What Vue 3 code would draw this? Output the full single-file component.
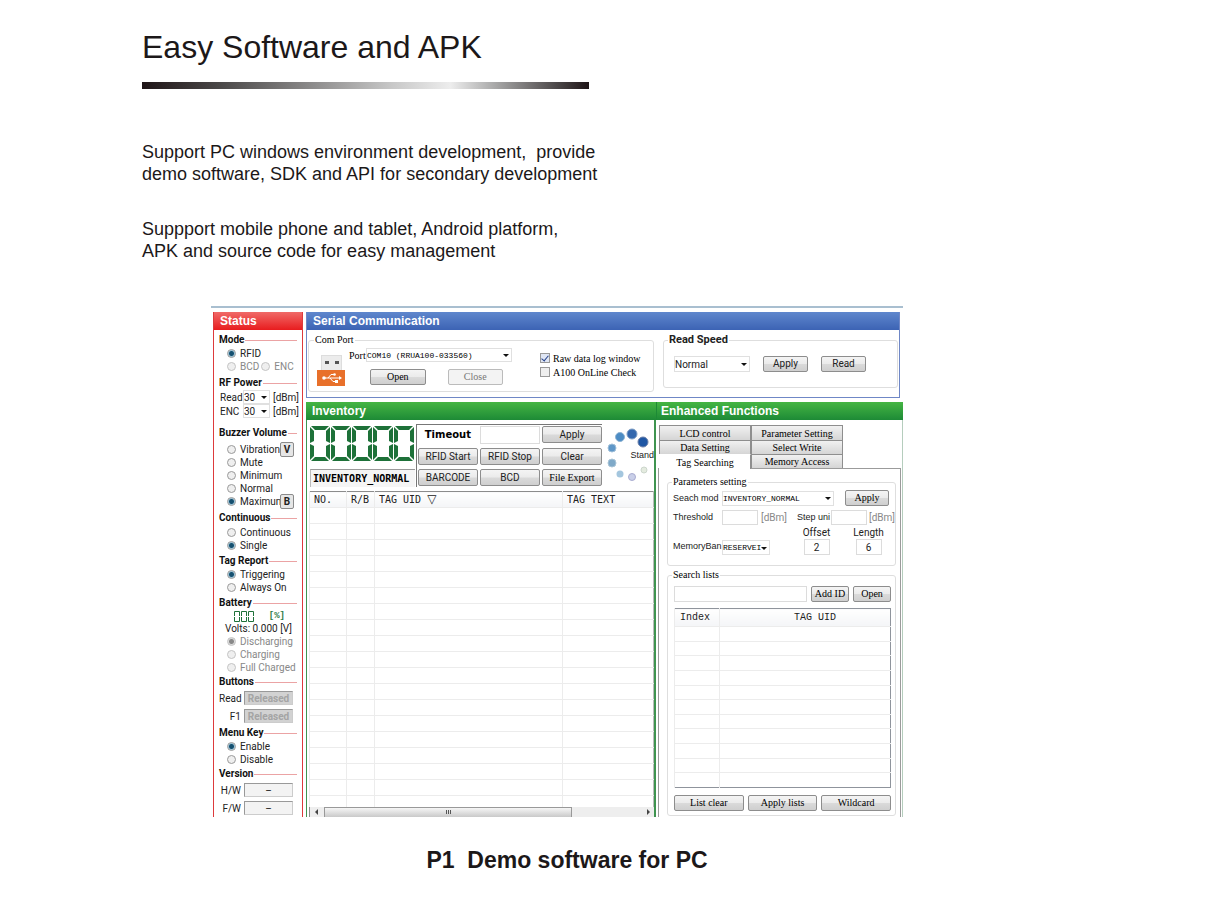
<script setup>
import { reactive, ref } from 'vue'

const groups = reactive([
  { id: 'buzzer', title: 'Buzzer Volume', cls: 'far', value: 'Maximum', options: ['Vibration', 'Mute', 'Minimum', 'Normal', 'Maximum'], keys: { Vibration: 'V', Maximum: 'B' } },
  { id: 'cont', title: 'Continuous', cls: 'mid', value: 'Single', options: ['Continuous', 'Single'], keys: {} },
  { id: 'report', title: 'Tag Report', cls: 'near', value: 'Triggering', options: ['Triggering', 'Always On'], keys: {} }
])
const mode = ref('RFID')
const battery = ref('Discharging')
const menuKey = ref('Enable')
const rawLog = ref(true)
const online = ref(false)
const segments = ['t', 'b', 'lt', 'lb', 'rt', 'rb']
</script>

<template>
  <main class="page">
    <h1>Easy Software and APK</h1>
    <div class="rule"></div>
    <p class="intro">Support PC windows environment development,&nbsp; provide<br>demo software, SDK and API for secondary development</p>
    <p class="intro second">Suppport mobile phone and tablet, Android platform,<br>APK and source code for easy management</p>

    <figure>
      <div class="app">
        <aside class="status">
          <h2 class="bar red">Status</h2>
          <div class="status-body">
            <section class="near">
              <h3>Mode</h3>
              <label class="opt"><input v-model="mode" type="radio" name="mode" value="RFID">RFID</label>
              <div class="pair">
                <label class="opt off"><input type="radio" name="mode" value="BCD" disabled>BCD</label>
                <label class="opt off"><input type="radio" name="mode" value="ENC" disabled>ENC</label>
              </div>
            </section>
            <section class="mid">
              <h3>RF Power</h3>
              <div v-for="p in ['Read', 'ENC']" :key="p" class="power">
                <label :for="'pw' + p">{{ p }}</label>
                <span class="sel"><select :id="'pw' + p"><option>30</option></select></span>
                <span>[dBm]</span>
              </div>
            </section>
            <section v-for="g in groups" :key="g.id" :class="[g.cls, g.id]">
              <h3>{{ g.title }}</h3>
              <div v-for="o in g.options" :key="o" class="line">
                <label class="opt"><input v-model="g.value" type="radio" :name="g.id" :value="o">{{ o }}</label>
                <button v-if="g.keys[o]" class="key" type="button">{{ g.keys[o] }}</button>
              </div>
            </section>
            <section class="near">
              <h3>Battery</h3>
              <div class="charge">
                <span class="led small" role="img" aria-label="000"><span v-for="n in 3" :key="n" class="digit"><i v-for="s in segments" :key="s" :class="s"></i></span></span>
                <span class="pct">[%]</span>
              </div>
              <div class="volts">Volts: 0.000 [V]</div>
              <label v-for="o in ['Discharging', 'Charging', 'Full Charged']" :key="o" class="opt off"><input v-model="battery" type="radio" name="battery" :value="o" disabled>{{ o }}</label>
            </section>
            <section class="tight">
              <h3>Buttons</h3>
              <div v-for="b in ['Read', 'F1']" :key="b" class="field">
                <label :for="'bt' + b">{{ b }}</label><input :id="'bt' + b" class="released" value="Released" disabled>
              </div>
            </section>
            <section class="tight">
              <h3>Menu Key</h3>
              <label v-for="o in ['Enable', 'Disable']" :key="o" class="opt"><input v-model="menuKey" type="radio" name="menukey" :value="o">{{ o }}</label>
            </section>
            <section class="tight">
              <h3>Version</h3>
              <div v-for="b in ['H/W', 'F/W']" :key="b" class="field">
                <label :for="'vr' + b">{{ b }}</label><input :id="'vr' + b" class="version" value="–" readonly>
              </div>
            </section>
          </div>
        </aside>

        <div class="work">
          <section class="serial">
            <h2 class="bar blue">Serial Communication</h2>
            <div class="serial-body">
              <fieldset class="com">
                <legend class="song">Com Port</legend>
                <div class="com-row">
                  <svg class="usb" width="28" height="31" viewBox="0 0 28 31" aria-hidden="true">
                    <rect x="4.500" y="0.500" width="20" height="15" fill="#ececec" stroke="#ddd" />
                    <rect x="8" y="6" width="4" height="3" fill="#555" /><rect x="18" y="6" width="4" height="3" fill="#555" />
                    <rect y="15" width="28" height="16" fill="#e8702a" />
                    <path d="M7 23H23M11 23L14 19.500H17M13 23L16 26.500H19" fill="none" stroke="#fff" />
                    <circle cx="7" cy="23" r="1.800" fill="#fff" /><circle cx="17.500" cy="19.500" r="1.300" fill="#fff" /><rect x="18" y="25" width="3" height="3" fill="#fff" /><path d="M22 21L25 23L22 25Z" fill="#fff" />
                  </svg>
                  <div class="port">
                    <div class="port-row">
                      <label class="song" for="port">Port</label>
                      <span class="sel"><select id="port" class="fixed"><option>COM10 (RRUA100-033560)</option></select></span>
                    </div>
                    <div class="port-btns">
                      <button class="btn song" type="button">Open</button>
                      <button class="btn song" type="button" disabled>Close</button>
                    </div>
                  </div>
                  <div class="checks song">
                    <label><input v-model="rawLog" type="checkbox">Raw data log window</label>
                    <label><input v-model="online" type="checkbox">A100 OnLine Check</label>
                  </div>
                </div>
              </fieldset>
              <fieldset class="speed">
                <legend>Read Speed</legend>
                <div class="speed-row">
                  <span class="sel"><select aria-label="Read Speed"><option>Normal</option></select></span>
                  <button class="btn" type="button">Apply</button>
                  <button class="btn" type="button">Read</button>
                </div>
              </fieldset>
            </div>
          </section>

          <div class="lower">
            <section class="inventory">
              <h2 class="bar green">Inventory</h2>
              <div class="inv-body">
                <div class="inv-top">
                  <div class="counter">
                    <span class="led" role="img" aria-label="00000"><span v-for="n in 5" :key="n" class="digit"><i v-for="s in segments" :key="s" :class="s"></i></span></span>
                    <div class="state">INVENTORY_NORMAL</div>
                  </div>
                  <div class="controls">
                    <label for="timeout">Timeout</label>
                    <input id="timeout" class="box">
                    <button class="btn" type="button">Apply</button>
                    <button class="btn" type="button">RFID Start</button>
                    <button class="btn" type="button">RFID Stop</button>
                    <button class="btn" type="button">Clear</button>
                    <button class="btn" type="button">BARCODE</button>
                    <button class="btn" type="button">BCD</button>
                    <button class="btn song" type="button">File Export</button>
                  </div>
                  <div class="spinner">
                    <svg width="48" height="58" viewBox="0 0 48 58" aria-hidden="true">
                      <circle cx="37" cy="16" r="5" fill="#1f57a4" stroke="#6b7fa8" /><circle cx="26" cy="8" r="5" fill="#3468ae" stroke="#7f9fc6" />
                      <circle cx="14" cy="11" r="4.500" fill="#4c8cc4" stroke="#8fb4d4" /><circle cx="6" cy="22" r="4" fill="#5f97c8" stroke="#a0bfd8" />
                      <circle cx="6" cy="37" r="4" fill="#7fa9c8" stroke="#a9c4d6" /><circle cx="14" cy="48" r="3.500" fill="#a4c6de" />
                      <circle cx="26" cy="51" r="3.500" fill="#c9cfe8" stroke="#a9acd0" /><circle cx="38" cy="44" r="3" fill="#e4ebdf" stroke="#ccd6cc" />
                    </svg>
                    <span>Stand</span>
                  </div>
                </div>
                <table class="grid tags">
                  <colgroup><col class="c1"><col class="c2"><col class="c3"><col></colgroup>
                  <thead><tr><th>NO.</th><th>R/B</th><th>TAG UID <span class="sort">▽</span></th><th>TAG TEXT</th></tr></thead>
                  <tbody><tr v-for="n in 19" :key="n"><td v-for="c in 4" :key="c"></td></tr></tbody>
                </table>
                <div class="scroll" aria-hidden="true"><i class="arr l"></i><span class="thumb"><b></b><b></b><b></b></span><span class="rest"></span><i class="arr r"></i></div>
              </div>
            </section>

            <section class="enhanced">
              <h2 class="bar green">Enhanced Functions</h2>
              <div class="enh-body">
                <div class="tabs song" role="tablist">
                  <button v-for="t in ['LCD control', 'Parameter Setting', 'Data Setting', 'Select Write', 'Tag Searching', 'Memory Access']" :key="t" type="button" role="tab" :class="{ active: t === 'Tag Searching' }" :aria-selected="t === 'Tag Searching'">{{ t }}</button>
                </div>
                <div class="sheet">
                  <fieldset class="params">
                    <legend class="song">Parameters setting</legend>
                    <div class="p-row">
                      <label class="lbl" for="smode">Seach mod</label>
                      <span class="sel wide"><select id="smode" class="fixed"><option>INVENTORY_NORMAL</option></select></span>
                      <button class="btn song" type="button">Apply</button>
                    </div>
                    <div class="p-row two">
                      <label class="lbl" for="thr">Threshold</label>
                      <input id="thr" class="box"><span class="unit">[dBm]</span>
                      <label class="step" for="step">Step uni</label>
                      <input id="step" class="box"><span class="unit">[dBm]</span>
                    </div>
                    <div class="p-row three">
                      <label class="lbl" for="bank">MemoryBan</label>
                      <span class="sel bank"><select id="bank" class="fixed"><option>RESERVEI</option></select></span>
                      <label class="num">Offset<input class="box" value="2"></label>
                      <label class="num">Length<input class="box" value="6"></label>
                    </div>
                  </fieldset>
                  <fieldset class="search">
                    <legend class="song">Search lists</legend>
                    <div class="s-row">
                      <input class="box" aria-label="Tag ID">
                      <button class="btn song" type="button">Add ID</button>
                      <button class="btn song" type="button">Open</button>
                    </div>
                    <table class="grid list">
                      <colgroup><col class="ci"><col></colgroup>
                      <thead><tr><th>Index</th><th>TAG UID</th></tr></thead>
                      <tbody><tr v-for="n in 11" :key="n"><td></td><td></td></tr></tbody>
                    </table>
                    <div class="s-btns">
                      <button class="btn song" type="button">List clear</button>
                      <button class="btn song" type="button">Apply lists</button>
                      <button class="btn song" type="button">Wildcard</button>
                    </div>
                  </fieldset>
                </div>
              </div>
            </section>
          </div>
        </div>
      </div>
      <figcaption>P1&nbsp; Demo software for PC</figcaption>
    </figure>
  </main>
</template>

<style>
body { margin: 0; background: #fff; }
</style>

<style scoped>
* { box-sizing: border-box; }
.page { padding: 29px 24px 24px 142px; font-family: "Liberation Sans", Arial, sans-serif; color: #1c1819; }
h1 { margin: 0 0 17px; font-size: 32px; line-height: 36px; font-weight: 400; }
.rule { max-width: 447px; height: 7px; background: linear-gradient(90deg, #1f1517, #4c4a4a 18%, #8c8b8b 38%, #c8c8c8 56%, #ededed 69%, #a8a8a8 79%, #4a4647 93%, #1f1517); }
.intro { margin: 52px 0 0; font-size: 18px; line-height: 22px; }
.intro.second { margin-top: 33px; }
figure { margin: 44px 0 0 69px; max-width: 692px; }
figcaption { margin-top: 30px; padding-left: 20px; text-align: center; font-size: 23px; line-height: 26px; font-weight: 700; }

.app { display: flex; gap: 3px; padding: 4px 0 0 2px; border-top: 2px solid #a9bfd0; font: 10px/13px Roboto, sans-serif; color: #222; }
.song { font-family: "Liberation Serif", serif; font-weight: 400; color: #000; }
button, input, select { margin: 0; padding: 0; font-size: 10px; font-family: Roboto, sans-serif; color: #222; }
button.song { font-family: "Liberation Serif", serif; color: #000; }
select.fixed { font-family: "Liberation Mono", monospace; font-size: 8px; color: #000; }
.bar { margin: 0; padding-left: 6px; height: 18px; font: bold 12px/18px "Liberation Sans", Arial, sans-serif; color: #fff; }
.red { background: linear-gradient(#f06a68, #e81c1e); }
.blue { background: linear-gradient(#5f87cd, #3c63b4); }
.green { background: linear-gradient(#45b543, #1d8a36); }

.status { flex: 0 0 90px; min-width: 0; border: solid #dd3a3c; border-width: 0 1px; }
.status-body { padding: 1px 5px 0; }
section.tight { margin-top: 1px; }
section.near { margin-top: 2px; }
section.mid { margin-top: 3px; }
section.far { margin-top: 8px; }
h3 { display: flex; align-items: center; gap: 1px; margin: 0; font-size: 10px; line-height: 14px; font-weight: 700; color: #111; white-space: nowrap; }
h3::after { content: ""; flex: 1; border-top: 1px solid #eba3a4; }
.buzzer h3 { margin-bottom: 3px; }
.cont h3 { margin-bottom: 1px; }
.opt { display: flex; align-items: center; gap: 4px; height: 13px; padding-left: 8px; white-space: nowrap; }
.off { color: #888; }
.pair { display: flex; }
.pair .opt + .opt { padding-left: 2px; }
.line { display: flex; align-items: center; height: 13px; position: relative; }
.key { position: absolute; right: 3px; width: 14px; height: 15px; border: 1px solid #8b8b8b; border-radius: 2px; background: #e6e6e6; font-weight: 700; line-height: 12px; }
input[type="radio"] { appearance: none; flex: none; width: 9px; height: 9px; border: 1px solid #9a9a9a; border-radius: 50%; background: #efefef; }
input[type="radio"]:checked { background: radial-gradient(circle, #16506f 0 2px, #9cc4d8 3px, #e8f2f6 4px); }
input[type="radio"]:disabled { border-color: #c4c4c4; }
input[type="radio"]:checked:disabled { background: radial-gradient(circle, #888 0 2px, #ddd 3px); }
.power { display: flex; align-items: center; height: 14px; white-space: nowrap; }
.power label { flex: none; width: 24px; padding-left: 1px; }
.power .sel { width: 27px; height: 14px; margin-right: 3px; }
.sel { display: block; position: relative; flex: none; height: 14px; border: 1px solid #e0e0e0; }
.sel::after { content: ""; position: absolute; right: 2px; top: 50%; margin-top: -1px; border: 3px solid transparent; border-top-color: #111; border-bottom: 0; }
select { display: block; width: 100%; height: 100%; appearance: none; border: 0; background: #fff; line-height: 11px; }
.charge { display: flex; align-items: center; justify-content: space-between; height: 12px; padding: 0 12px 0 15px; }
.pct { font: bold 9px/12px "Liberation Mono", monospace; color: #2f7d48; }
.volts { padding-left: 6px; line-height: 13px; white-space: nowrap; }
.field { display: flex; align-items: center; height: 18px; }
.field label { flex: none; width: 25px; padding-right: 3px; text-align: right; }
.field input { flex: none; width: 49px; height: 14px; border: 1px solid #ccc; border-top-color: #999; border-left-color: #999; text-align: center; background: #f3f3f3; }
.field .released { background: #d2d2d2; color: #a4a4a4; font-weight: 700; }

.led { --w: 21px; --h: 17px; --t: 4px; --m: 2px; display: flex; }
.led.small { --w: 7px; --h: 5px; --t: 1px; --m: 0px; }
.digit { display: grid; width: var(--w); grid-template: var(--h) var(--h) / 1fr; row-gap: 1px; padding-right: 1px; }
.digit i { border: 0 solid transparent; color: #1e7139; }
.t, .b { margin: 0 1px; }
.t { grid-area: 1 / 1; align-self: start; border-width: var(--t) var(--t) 0 !important; border-top-color: currentColor !important; }
.b { grid-area: 2 / 1; align-self: end; border-width: 0 var(--t) var(--t) !important; border-bottom-color: currentColor !important; }
.lt, .rt { grid-area: 1 / 1; margin-top: 1px; border-width: var(--t) 0 var(--m) !important; }
.lb, .rb { grid-area: 2 / 1; margin-bottom: 1px; border-width: var(--m) 0 var(--t) !important; }
.lt, .lb { justify-self: start; border-left: var(--t) solid currentColor !important; }
.rt, .rb { justify-self: end; border-right: var(--t) solid currentColor !important; }
.small i { margin: 0; }

.work { flex: 1; min-width: 0; }
.serial { margin-right: 3px; border: 1px solid #6f87c6; border-top: 0; }
.serial-body { display: flex; align-items: flex-start; gap: 9px; padding: 4px 1px 5px; }
fieldset { margin: 0; padding: 0; min-width: 0; border: 1px solid #dedede; border-radius: 3px; }
legend { margin-left: 5px; padding: 0 1px; line-height: 12px; }
.com { flex: 0 0 346px; }
.com-row { display: flex; align-items: flex-start; padding: 2px 0 5px 8px; }
.usb { margin-top: 7px; flex: none; }
.port { margin-left: 4px; width: 163px; }
.port-row { display: flex; align-items: center; }
.port-row label { width: 17px; }
.port-row .sel { flex: 1; }
.port-btns { display: flex; gap: 22px; padding: 7px 9px 0 21px; }
.btn { height: 16px; border: 1px solid #8d8d8d; border-radius: 2px; background: linear-gradient(#f4f4f4, #ebebeb 48%, #dadada 52%, #cfcfcf); line-height: 12px; white-space: nowrap; }
.btn:disabled { border-color: #bbb; background: #f3f3f3; color: #777; }
.port-btns .btn { flex: 1; }
.checks { margin: 3px 0 0 28px; white-space: nowrap; }
.checks label { display: flex; align-items: center; gap: 3px; height: 14px; }
input[type="checkbox"] { appearance: none; position: relative; width: 10px; height: 10px; border: 1px solid #999; background: #eee; }
input[type="checkbox"]:checked { background: #dfe6f4; }
input[type="checkbox"]:checked::after { content: ""; position: absolute; left: 2px; top: 0; width: 3px; height: 6px; border: solid #24408a; border-width: 0 1px 1px 0; transform: rotate(40deg); }
.speed { flex: 1; }
.speed legend { font-weight: 700; font-size: 11px; margin-left: 4px; }
.speed-row { display: flex; align-items: center; gap: 13px; padding: 10px 10px 15px; }
.speed-row .sel { width: 76px; height: 16px; }
.speed-row .btn { width: 45px; }

.lower { display: flex; margin-top: 4px; }
.inventory { flex: 0 1 350px; display: flex; flex-direction: column; min-width: 0; }
.inv-body { flex: 1; display: flex; flex-direction: column; padding: 4px 0 0 2px; border: solid #3f9450; border-width: 0 2px 0 1px; }
.inv-top { display: flex; height: 67px; }
.counter { width: 105px; margin: 2px 1px 0 1px; }
.state { margin-top: 8px; height: 18px; border-top: 1px solid #999; border-left: 1px solid #bbb; background: #f5f5f5; padding-left: 2px; font: bold 10px/17px "DejaVu Sans Mono", monospace; color: #000; }
.controls { display: grid; grid-template-columns: repeat(3, 60px); gap: 4px 2px; align-content: start; height: 63px; padding: 1px 0 0 1px; border: solid #777; border-width: 1px 0 0 1px; }
.controls .btn { height: 17px; }
.controls label { padding-right: 7px; text-align: right; font: bold 10px/18px "DejaVu Sans", sans-serif; color: #000; }
.box { border: 1px solid #dcdcdc; background: #fff; min-width: 0; text-align: center; }
.spinner { position: relative; flex: 1; margin: 2px 0 0 4px; height: 60px; }
.spinner span { position: absolute; right: 0; top: 23px; font: 9px/13px "Liberation Sans", sans-serif; }
.grid { width: 100%; border-collapse: collapse; table-layout: fixed; }
.grid th { padding: 0 5px; text-align: left; font-weight: 400; white-space: nowrap; }
.grid td { padding: 0; border-top: 1px solid #ececec; border-left: 1px solid #ececec; }
.grid th { border-left: 1px solid #ececec; background: linear-gradient(#fff, #f4f5f7); }
.tags { border: 1px solid #8c8c8c; border-bottom: 0; border-right-color: #bbb; }
.tags th { height: 16px; font: 10px/14px "DejaVu Sans Mono", monospace; padding-left: 4px; }
.sort { font-family: "DejaVu Sans", sans-serif; font-size: 12px; line-height: 10px; }
.tags td { height: 16px; }
.tags tbody tr:last-child td { height: 11px; }
.c1 { width: 37px; } .c2 { width: 28px; } .c3 { width: 188px; } .ci { width: 45px; }
.scroll { display: flex; align-items: center; height: 10px; background: #eeeeee; border-left: 1px solid #8c8c8c; padding: 0 4px 0 5px; }
.thumb { flex: 247; height: 10px; margin-left: 6px; border: 1px solid #999; border-bottom: 0; background: linear-gradient(#f6f6f6, #c9c9c9); display: flex; gap: 1px; justify-content: center; align-items: center; }
.thumb b { width: 1px; height: 4px; background: #555; }
.rest { flex: 75; }
.arr { border: 3px solid transparent; }
.arr.l { border-left: 0; border-right-color: #444; }
.arr.r { border-right: 0; border-left-color: #444; }

.enhanced { flex: 1; min-width: 0; display: flex; flex-direction: column; }
.enhanced .bar { padding-left: 4px; border-left: 1px solid #1d8a36; }
.enh-body { flex: 1; padding: 5px 1px 0 2px; border-right: 1px solid #b5cdbd; }
.tabs { display: grid; grid-template-columns: 92px 92px; padding-left: 1px; }
.tabs button { height: 15px; border: 1px solid #8e8e8e; border-width: 1px 1px 0 1px; background: linear-gradient(#f1f1f1, #d5d5d5); font-family: inherit; color: #000; line-height: 13px; }
.tabs button:nth-child(n+3) { height: 14px; }
.tabs button.active { position: relative; height: 15px; background: #fff; border-color: #fff #8e8e8e #fff #fff; line-height: 11px; }
.sheet { margin-top: -1px; padding: 7px 4px 1px 8px; border: 1px solid #9b9b9b; border-bottom: 0; }
.params { padding: 2px 0 10px 5px; }
.params legend { margin-left: -1px; }
.p-row { display: flex; align-items: center; }
.lbl, .step { font-family: "Liberation Sans", sans-serif; font-size: 9px; white-space: nowrap; }
.lbl { width: 49px; flex: none; }
.wide { width: 112px; height: 15px; margin-right: 11px; }
.p-row .btn { width: 44px; }
.two { margin-top: 4px; }
.two .box { width: 36px; height: 15px; }
.unit { padding-left: 3px; color: #888; }
.step { width: 34px; margin-left: auto; }
.two .unit:last-child { width: 28px; padding-left: 2px; }
.three { align-items: flex-end; margin-top: 2px; }
.three .lbl { line-height: 18px; }
.bank { width: 48px; height: 15px; }
.num { display: flex; flex-direction: column; align-items: center; line-height: 12px; width: 27px; margin-left: 33px; }
.num + .num { margin-left: 25px; }
.num .box { width: 26px; height: 16px; }
.search { margin-top: 3px; padding: 5px 4px 4px 6px; }
.search legend { margin-left: -2px; }
.s-row { display: flex; gap: 4px; }
.s-row .box { flex: 1; }
.s-row .btn { width: 38px; }
.list { height: 180px; margin-top: 6px; border: 1px solid #8f949c; }
.list th { height: 18px; font: 10px/14px "Liberation Mono", monospace; }
.list th:last-child { text-align: center; padding-left: 20px; padding-right: 0; }
.s-btns { display: flex; gap: 4px; margin-top: 7px; }
.s-btns .btn { flex: 1; }
</style>
